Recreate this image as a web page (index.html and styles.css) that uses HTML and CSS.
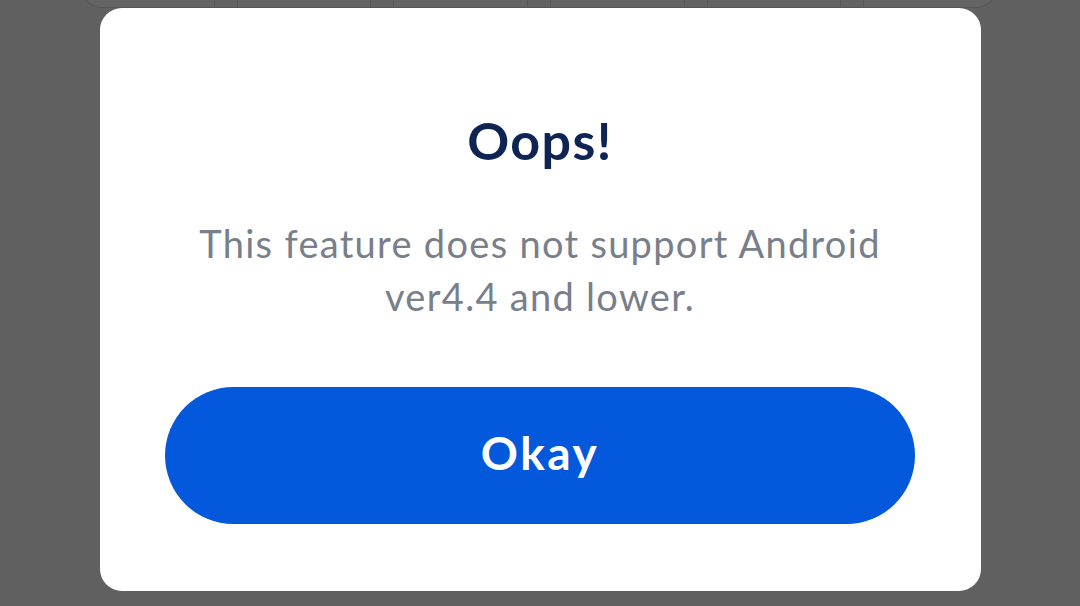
FILE: index.html
```html
<!DOCTYPE html>
<html lang="en">
<head>
<meta charset="utf-8">
<title>Oops</title>
<link rel="stylesheet" href="styles.css">
</head>
<body>
  <div class="page">
    <div class="tabs">
      <div class="cell"></div><div class="sep"></div>
      <div class="cell"></div><div class="sep"></div>
      <div class="cell"></div><div class="sep"></div>
      <div class="cell"></div><div class="sep"></div>
      <div class="cell"></div><div class="sep"></div>
      <div class="cell"></div>
    </div>
  </div>
  <div class="dialog" role="dialog">
    <h1 class="title">Oops!</h1>
    <p class="message">This feature does not support Android<br>ver4.4 and lower.</p>
    <button class="btn">Okay</button>
  </div>
</body>
</html>
```

FILE: styles.css
```css
html, body {
  margin: 0;
  padding: 0;
  width: 1080px;
  height: 606px;
  overflow: hidden;
  background: #606060;
  font-family: Lato, "Open Sans", sans-serif;
}
.page {
  padding: 0 82px 0 80px;
}
.tabs {
  display: flex;
  height: 28px;
  margin-top: -20px;
  background: #646464;
  border: 1px solid #565656;
  border-top: none;
  border-radius: 0 0 22px 22px;
  box-sizing: border-box;
}
.cell {
  flex: 1;
}
.sep {
  width: 22px;
  border-left: 1px solid #565656;
  border-right: 1px solid #565656;
  background: #626262;
}
.dialog {
  position: absolute;
  left: 100px;
  top: 8px;
  width: 881px;
  height: 583px;
  box-sizing: border-box;
  background: #ffffff;
  border-radius: 22px;
  padding: 0 66px 67px 65px;
  display: flex;
  flex-direction: column;
  align-items: center;
}
.title {
  margin: 102px 0 0;
  font-size: 52px;
  line-height: 60px;
  font-weight: 700;
  letter-spacing: 1.4px;
  color: #0e2453;
}
.message {
  margin: 47px 0 0;
  font-size: 38px;
  line-height: 53px;
  font-weight: 400;
  letter-spacing: 1.3px;
  color: #787e8a;
  text-align: center;
}
.btn {
  margin-top: auto;
  width: 100%;
  height: 137px;
  border: none;
  border-radius: 69px;
  background: #0358dc;
  color: #ffffff;
  font-family: inherit;
  font-size: 46px;
  font-weight: 700;
  letter-spacing: 2.5px;
  padding: 0 0 6px;
}
```
